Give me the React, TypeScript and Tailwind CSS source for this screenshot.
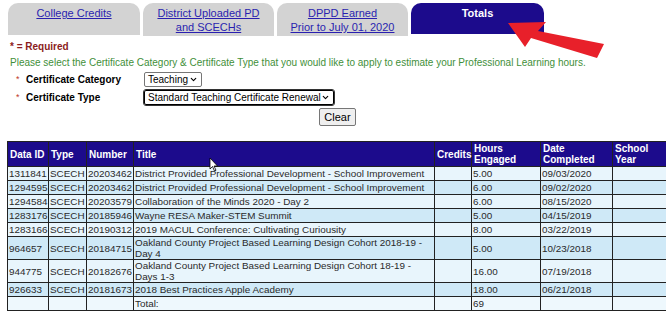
import { ChevronDown } from "lucide-react";

const rows = [
    { id: "1311841", type: "SCECH", num: "20203462", title: "District Provided Professional Development - School Improvement", hours: "5.00", date: "09/03/2020" },
    { id: "1294595", type: "SCECH", num: "20203462", title: "District Provided Professional Development - School Improvement", hours: "6.00", date: "09/02/2020" },
    { id: "1294584", type: "SCECH", num: "20203579", title: "Collaboration of the Minds 2020 - Day 2", hours: "6.00", date: "08/15/2020" },
    { id: "1283176", type: "SCECH", num: "20185946", title: "Wayne RESA Maker-STEM Summit", hours: "5.00", date: "04/15/2019" },
    { id: "1283166", type: "SCECH", num: "20190312", title: "2019 MACUL Conference: Cultivating Curiousity", hours: "8.00", date: "03/22/2019" },
    { id: "964657", type: "SCECH", num: "20184715", title: "Oakland County Project Based Learning Design Cohort 2018-19 - Day 4", hours: "5.00", date: "10/23/2018" },
    { id: "944775", type: "SCECH", num: "20182676", title: "Oakland County Project Based Learning Design Cohort 18-19 - Days 1-3", hours: "16.00", date: "07/19/2018" },
    { id: "926633", type: "SCECH", num: "20181673", title: "2018 Best Practices Apple Academy", hours: "18.00", date: "06/21/2018" },
];

const td = "border border-[#222] px-[1px] py-0 align-middle leading-[11px] whitespace-normal";
const th = "border border-[#222] px-[2px] py-[1px] text-left align-middle font-bold leading-[11px]";

const App = () => {
    return (
        <div className="relative h-[325px] w-[666px] overflow-hidden bg-white font-['Liberation_Sans',Arial,sans-serif] text-[10px]">

            {/* tabs */}
            <div className="flex gap-[3px] pl-[8px] pt-[3px] text-[11px]">
                <div className="h-[32px] w-[132px] rounded-t-[10px] bg-[#d3d3d3] pt-[3px] text-center leading-[14px] text-[#2a1fb0] underline">
                    College Credits
                </div>
                <div className="h-[33px] w-[131px] rounded-t-[10px] bg-[#d3d3d3] pt-[3px] text-center leading-[14px] text-[#2a1fb0] underline">
                    District Uploaded PD<br />and SCECHs
                </div>
                <div className="h-[33px] w-[131px] rounded-t-[10px] bg-[#d3d3d3] pt-[3px] text-center leading-[14px] text-[#2a1fb0] underline">
                    DPPD Earned<br />Prior to July 01, 2020
                </div>
                <div className="h-[31px] w-[133px] rounded-t-[10px] bg-[#1c0b8c] pt-[3px] text-center font-bold leading-[14px] text-white">
                    Totals
                </div>
            </div>

            <div className="pl-[10px] pt-[5px]">
                <div className="font-bold leading-[12px] text-[#8b1c1c]">* = Required</div>
                <div className="mt-[4px] leading-[12px] text-[#3f8f3a]">
                    Please select the Certificate Category &amp; Certificate Type that you would like to apply to estimate your Professional Learning hours.
                </div>

                <div className="mt-[3px] flex items-center">
                    <span className="w-[16px] pl-[6px] text-[9px] text-[#c0392b]">*</span>
                    <span className="w-[118px] font-bold">Certificate Category</span>
                    <div className="flex h-[15px] w-[58px] items-center justify-between rounded-[2px] border border-[#767676] px-[3px] leading-[13px]">
                        Teaching <ChevronDown size={9} strokeWidth={3} />
                    </div>
                </div>
                <div className="mt-[3px] flex items-center">
                    <span className="w-[16px] pl-[6px] text-[9px] text-[#c0392b]">*</span>
                    <span className="w-[118px] font-bold">Certificate Type</span>
                    <div className="flex h-[15px] w-[190px] items-center justify-between rounded-[2px] border border-black px-[3px] leading-[13px] outline outline-1 outline-[#333]">
                        Standard Teaching Certificate Renewal <ChevronDown size={9} strokeWidth={3} />
                    </div>
                </div>
                <div className="mt-[3px] flex pl-[309px]">
                    <button type="button" className="h-[18px] w-[37px] rounded-[2px] border border-[#767676] bg-[#efefef] text-[11px] leading-[16px]">
                        Clear
                    </button>
                </div>
            </div>

            {/* table */}
            <div className="mt-[15px] pl-[7px]">
                <table className="w-[700px] table-fixed border-collapse text-[9.9px] text-[#2a2a2a]">
                    <colgroup>
                        <col className="w-[41px]" />
                        <col className="w-[38px]" />
                        <col className="w-[47px]" />
                        <col className="w-[301px]" />
                        <col className="w-[37px]" />
                        <col className="w-[69px]" />
                        <col className="w-[72px]" />
                        <col className="w-[95px]" />
                    </colgroup>
                    <thead>
                        <tr className="h-[25px] bg-[#1c0b8c] text-[10px] text-white">
                            <th className={th}>Data ID</th>
                            <th className={th}>Type</th>
                            <th className={th}>Number</th>
                            <th className={th}>Title</th>
                            <th className={th}>Credits</th>
                            <th className={th}>Hours<br />Engaged</th>
                            <th className={th}>Date<br />Completed</th>
                            <th className={th}>School<br />Year</th>
                        </tr>
                    </thead>
                    <tbody>
                        {rows.map((r, i) => (
                            <tr key={r.id} className={`h-[14px] ${i % 2 === 0 ? "bg-[#e8f5fc]" : "bg-[#cfe9f7]"}`}>
                                <td className={td}>{r.id}</td>
                                <td className={td}>{r.type}</td>
                                <td className={td}>{r.num}</td>
                                <td className={td}>{r.title}</td>
                                <td className={td}></td>
                                <td className={td}>{r.hours}</td>
                                <td className={td}>{r.date}</td>
                                <td className={td}></td>
                            </tr>
                        ))}
                        <tr className="h-[14px] bg-[#eef8fd]">
                            <td className={td}></td>
                            <td className={td}></td>
                            <td className={td}></td>
                            <td className={td}>Total:</td>
                            <td className={td}></td>
                            <td className={td}>69</td>
                            <td className={td}></td>
                            <td className={td}></td>
                        </tr>
                    </tbody>
                </table>
            </div>

            {/* red arrow pointing at the Totals tab */}
            <svg className="pointer-events-none absolute left-0 top-0" width="666" height="325">
                <polygon points="508,23 546,22 538,31 604,44 597,58 531,38 525,47" fill="#e8202a" />
            </svg>

            {/* mouse pointer */}
            <svg className="pointer-events-none absolute left-[209px] top-[157px]" width="10" height="15" viewBox="0 0 10 15">
                <path d="M1 1 L1 12 L3.5 9.5 L5.5 14 L7 13.3 L5 9 L8.5 9 Z" fill="white" stroke="black" strokeWidth="0.8" />
            </svg>
        </div>
    );
};

export default App;
